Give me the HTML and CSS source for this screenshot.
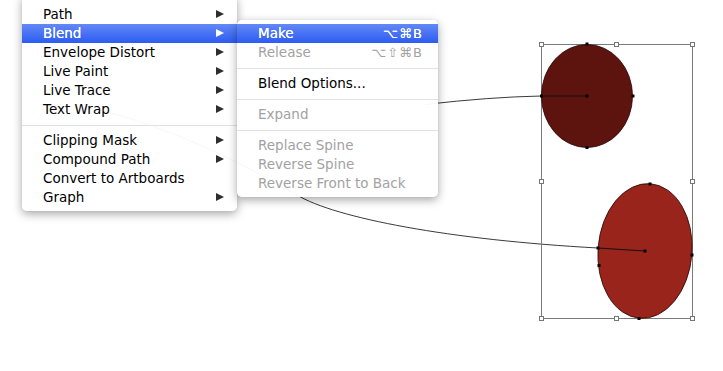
FILE: index.html
```html
<!DOCTYPE html>
<html lang="en">
<head>
    <meta charset="UTF-8">
    <title>Object Menu - Blend</title>
    <link rel="stylesheet" href="styles.css">
</head>
<body>
    <div class="canvas">
        <svg class="art" width="723" height="371" viewBox="0 0 723 371">
            <!-- spine paths -->
            <path class="spine" d="M100 110 C180 130, 254 170, 297 195 C335 218, 450 240, 598 248"/>
            <path class="spine" d="M425 104.5 Q490 97, 541 96"/>

            <!-- bounding box -->
            <rect class="bbox" x="541.5" y="44.5" width="151" height="274"/>

            <!-- blend objects -->
            <ellipse class="blob dark" cx="587" cy="96" rx="45.5" ry="51.5"/>
            <ellipse class="blob red" cx="645" cy="251" rx="47" ry="67.5" transform="rotate(4.5 645 251)"/>

            <line class="handle-line" x1="541" y1="96" x2="587" y2="96"/>
            <line class="handle-line" x1="598" y1="248" x2="645" y2="251"/>

            <!-- anchor points -->
            <g class="anchors">
                <rect x="585.5" y="42.5" width="3" height="3"/>
                <rect x="585.5" y="146" width="3" height="3"/>
                <rect x="540" y="94.5" width="3" height="3"/>
                <rect x="631.5" y="94.5" width="3" height="3"/>
                <rect x="585.5" y="94.5" width="3" height="3"/>
                <rect x="648.5" y="182.5" width="3" height="3"/>
                <rect x="637.5" y="317" width="3" height="3"/>
                <rect x="690.5" y="253.5" width="3" height="3"/>
                <rect x="596.5" y="246.5" width="3" height="3"/>
                <rect x="597.5" y="264" width="3" height="3"/>
                <rect x="643.5" y="249.5" width="3" height="3"/>
            </g>

            <!-- bounding box handles -->
            <g class="handles">
                <rect x="539.5" y="42.5" width="4" height="4"/>
                <rect x="614.5" y="42.5" width="4" height="4"/>
                <rect x="690.5" y="42.5" width="4" height="4"/>
                <rect x="539.5" y="179.5" width="4" height="4"/>
                <rect x="690.5" y="179.5" width="4" height="4"/>
                <rect x="539.5" y="316.5" width="4" height="4"/>
                <rect x="614.5" y="316.5" width="4" height="4"/>
                <rect x="690.5" y="316.5" width="4" height="4"/>
            </g>
        </svg>

        <div class="menu main-menu">
            <div class="item"><span>Path</span><span class="arrow"></span></div>
            <div class="item selected"><span>Blend</span><span class="arrow"></span></div>
            <div class="item"><span>Envelope Distort</span><span class="arrow"></span></div>
            <div class="item"><span>Live Paint</span><span class="arrow"></span></div>
            <div class="item"><span>Live Trace</span><span class="arrow"></span></div>
            <div class="item"><span>Text Wrap</span><span class="arrow"></span></div>
            <div class="separator"></div>
            <div class="item"><span>Clipping Mask</span><span class="arrow"></span></div>
            <div class="item"><span>Compound Path</span><span class="arrow"></span></div>
            <div class="item"><span>Convert to Artboards</span></div>
            <div class="item"><span>Graph</span><span class="arrow"></span></div>
        </div>

        <div class="menu sub-menu">
            <div class="item selected"><span>Make</span><span class="shortcut">⌥⌘B</span></div>
            <div class="item disabled"><span>Release</span><span class="shortcut">⌥⇧⌘B</span></div>
            <div class="separator"></div>
            <div class="item"><span>Blend Options...</span></div>
            <div class="separator"></div>
            <div class="item disabled"><span>Expand</span></div>
            <div class="separator"></div>
            <div class="item disabled"><span>Replace Spine</span></div>
            <div class="item disabled"><span>Reverse Spine</span></div>
            <div class="item disabled"><span>Reverse Front to Back</span></div>
        </div>
    </div>
</body>
</html>
```

FILE: styles.css
```css
body {
    margin: 0;
    background: #fff;
    font-family: "DejaVu Sans", "Lucida Grande", sans-serif;
    overflow: hidden;
}
.canvas {
    position: relative;
    width: 723px;
    height: 371px;
}
.art {
    position: absolute;
    left: 0;
    top: 0;
}
.spine {
    fill: none;
    stroke: #3a3a3a;
    stroke-width: 1;
}
.bbox {
    fill: none;
    stroke: #7a7a7a;
    stroke-width: 1;
}
.blob {
    stroke: #2a0805;
    stroke-width: 0.8;
}
.dark { fill: #5e140e; }
.red { fill: #98241c; }
.handle-line {
    stroke: #111;
    stroke-width: 1;
}
.anchors rect { fill: #000; }
.handles rect {
    fill: #fff;
    stroke: #777;
    stroke-width: 1;
}

.menu {
    position: absolute;
    background: rgba(255, 255, 255, 0.96);
    border-radius: 5px;
    box-shadow: 0 3px 10px rgba(0, 0, 0, 0.35), 0 0 1px rgba(0, 0, 0, 0.15);
    font-size: 13.5px;
    color: #000;
}
.main-menu {
    left: 22px;
    top: -5px;
    width: 215px;
    padding: 10px 0 4px;
}
.sub-menu {
    left: 237px;
    top: 20px;
    width: 201px;
    padding: 4px 0;
}
.item {
    box-sizing: border-box;
    display: flex;
    align-items: center;
    justify-content: space-between;
    height: 19px;
    padding: 0 13px 1px 21px;
    white-space: nowrap;
}
.sub-menu .item {
    padding-right: 15px;
}
.item.selected {
    background: linear-gradient(#6388f6, #2c5cf1);
    color: #fff;
    text-shadow: 0 0 0.4px #fff;
}
.item.disabled {
    color: #a2a2a2;
}
.arrow {
    width: 0;
    height: 0;
    border-left: 8px solid #2e2e2e;
    border-top: 4.5px solid transparent;
    border-bottom: 4.5px solid transparent;
}
.selected .arrow {
    border-left-color: #fff;
}
.shortcut {
    letter-spacing: 1px;
    font-size: 13px;
}
.separator {
    height: 12px;
    display: flex;
    align-items: center;
}
.separator::after {
    content: "";
    flex: 1;
    height: 1px;
    background: #e2e2e2;
}
```
